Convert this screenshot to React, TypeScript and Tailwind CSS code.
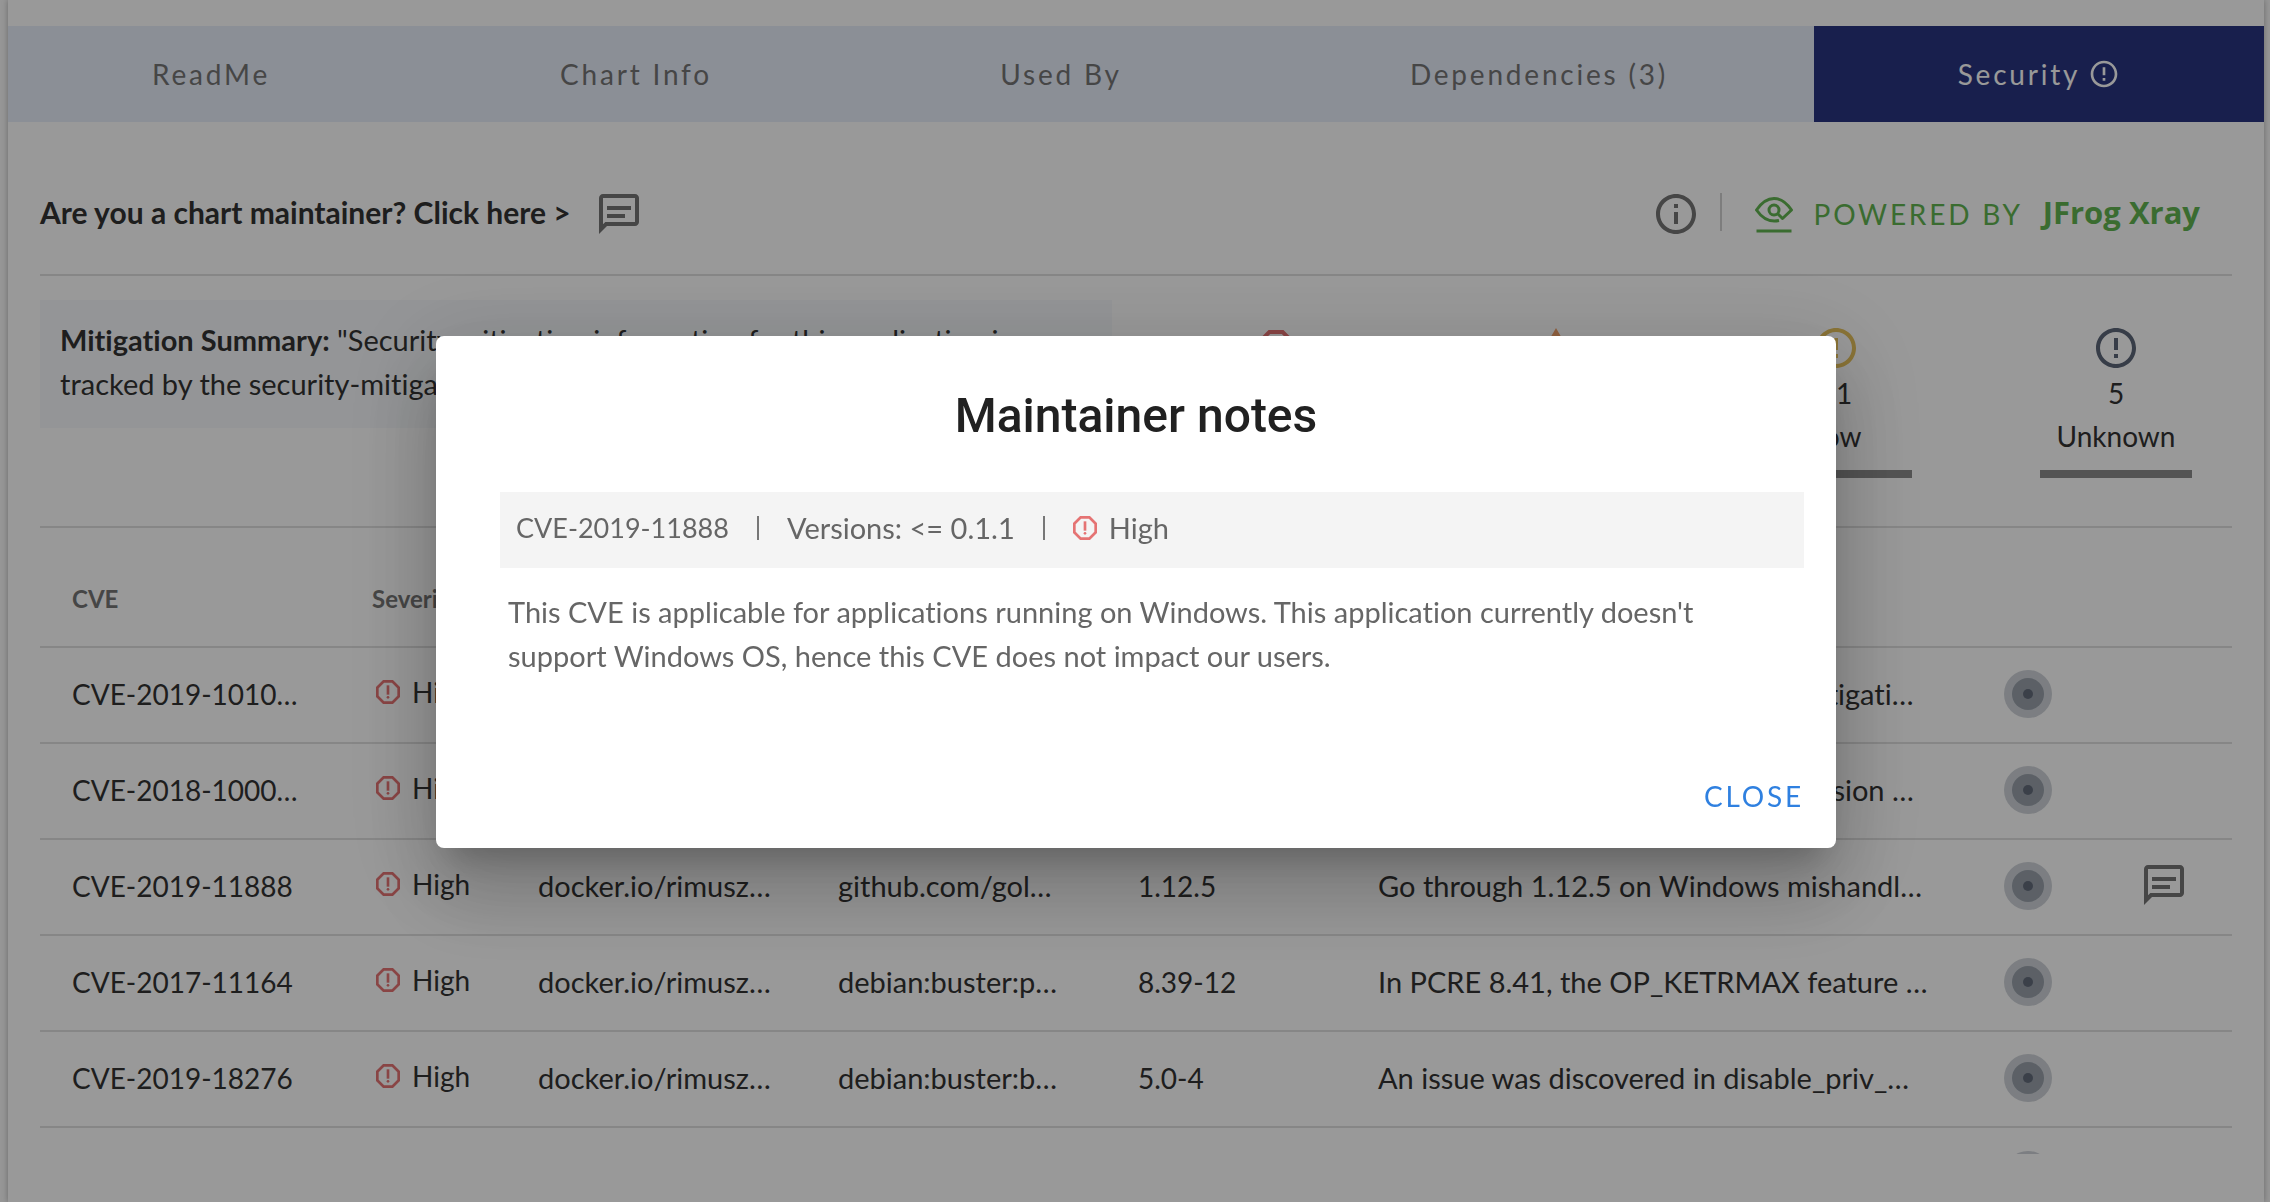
import React from "react";

type Row = {
  cve: string;
  component: string;
  source: string;
  version: string;
  summary: string;
  note?: boolean;
};

const tabs = ["ReadMe", "Chart Info", "Used By", "Dependencies (3)"];

const rows: Row[] = [
  { cve: "CVE-2019-1010…", component: "docker.io/rimusz…", source: "debian:buster:g…", version: "2.28-10", summary: "GNU Libc current is affected by: Mitigati…" },
  { cve: "CVE-2018-1000…", component: "docker.io/rimusz…", source: "debian:buster:t…", version: "4.13-3", summary: "GNU Libtasn1-4.13 libtasn1-4.1 version …" },
  { cve: "CVE-2019-11888", component: "docker.io/rimusz…", source: "github.com/gol…", version: "1.12.5", summary: "Go through 1.12.5 on Windows mishandl…", note: true },
  { cve: "CVE-2017-11164", component: "docker.io/rimusz…", source: "debian:buster:p…", version: "8.39-12", summary: "In PCRE 8.41, the OP_KETRMAX feature …" },
  { cve: "CVE-2019-18276", component: "docker.io/rimusz…", source: "debian:buster:b…", version: "5.0-4", summary: "An issue was discovered in disable_priv_…" },
];

function NoteIcon() {
  return (
    <svg viewBox="0 0 24 24" className="size-12 shrink-0 fill-[#757575]" aria-hidden="true">
      <path d="M4 4h16v12H5.17L4 17.17V4m0-2c-1.1 0-1.99.9-1.99 2L2 22l4-4h14c1.1 0 2-.9 2-2V4c0-1.1-.9-2-2-2H4zm2 10h9v2H6v-2zm0-4h12v2H6V8z" />
    </svg>
  );
}

function HighIcon({ className }: { className: string }) {
  return (
    <svg viewBox="0 0 24 24" className={"shrink-0 " + className} aria-hidden="true">
      <path d="M15.73 3H8.27L3 8.27v7.46L8.27 21h7.46L21 15.73V8.27L15.73 3zM19 14.9L14.9 19H9.1L5 14.9V9.1L9.1 5h5.8L19 9.1v5.8z" />
      <circle cx="12" cy="16" r="1" />
      <path d="M11 7h2v7h-2z" />
    </svg>
  );
}

function AlertCircle({ className }: { className: string }) {
  return (
    <svg viewBox="0 0 24 24" className={"shrink-0 " + className} aria-hidden="true">
      <path d="M11 15h2v2h-2zm0-8h2v6h-2zm.99-5C6.47 2 2 6.48 2 12s4.47 10 9.99 10C17.52 22 22 17.52 22 12S17.52 2 11.99 2zM12 20c-4.42 0-8-3.58-8-8s3.58-8 8-8 8 3.58 8 8-3.58 8-8 8z" />
    </svg>
  );
}

function XrayEye() {
  return (
    <svg viewBox="0 0 40 40" className="size-10 shrink-0 fill-none stroke-[#62b450]" strokeWidth="3" aria-hidden="true">
      <path d="M25 26.5C16 28.5 8 24 2.500 16C8 8 14 4.500 20 4.500S32 8 37.500 16L28.500 24.500L23.500 19.500" strokeLinejoin="round" />
      <circle cx="20" cy="16" r="5" />
      <path d="M2.500 37h35" />
    </svg>
  );
}

function Stat({ icon, count, label }: { icon: React.ReactNode; count: number; label: string }) {
  return (
    <div className="flex w-[152px] flex-col items-center text-[28px] leading-[43px] text-[#333]">
      {icon}
      <span>{count}</span>
      <span>{label}</span>
      <span className="mt-3 h-2 w-full bg-[#8c8c8c]" />
    </div>
  );
}

function RiskDot() {
  return (
    <span className="flex size-12 items-center justify-center rounded-full bg-[#cfd3d9]">
      <span className="flex size-8 items-center justify-center rounded-full bg-[#99a1ab]">
        <span className="size-[10px] rounded-full bg-[#636b7b]" />
      </span>
    </span>
  );
}

export default function App() {
  return (
    <div className="h-screen overflow-hidden bg-[#fafafa] pr-[6px] pl-[8px] font-['Lato',sans-serif] [font-variant-ligatures:none]">
      <main className="h-full bg-white pt-[26px] shadow-[0_0_6px_rgba(0,0,0,0.3)]">
        <nav className="grid h-24 grid-cols-[406fr_444fr_406fr_550fr_450fr] bg-[#e8eefb] text-[28px] tracking-widest text-[#757575]">
          {tabs.map((tab) => (
            <button key={tab} type="button">{tab}</button>
          ))}
          <button type="button" className="flex items-center justify-center gap-2 bg-[#283580] tracking-widest text-white">
            Security
            <AlertCircle className="size-8 fill-white" />
          </button>
        </nav>

        <div className="px-8">
          <header className="flex h-[154px] items-center justify-between border-b-2 border-[#e0e0e0] pt-8">
            <button type="button" className="flex items-center gap-6 text-[30px] leading-[44px] font-bold text-[#333]">
              <span className="pb-1">Are you a chart maintainer? Click here &gt;</span>
              <NoteIcon />
            </button>
            <div className="flex items-center pr-8">
              <svg viewBox="0 0 24 24" className="size-12 fill-[#757575]" role="img" aria-label="About this scan">
                <path d="M11 7h2v2h-2zm0 4h2v6h-2zm1-9C6.480 2 2 6.480 2 12s4.480 10 10 10 10-4.480 10-10S17.520 2 12 2zm0 18c-4.410 0-8-3.590-8-8s3.590-8 8-8 8 3.590 8 8-3.590 8-8 8z" />
              </svg>
              <span className="mb-1 ml-5 h-[38px] w-0.5 bg-[#d0d0d0]" />
              <a href="#xray" className="ml-8 flex items-center gap-5 text-[28px] tracking-widest text-[#62b450]">
                <XrayEye />
                POWERED BY
                <span className="pb-1 font-['Open_Sans',sans-serif] text-[31px] leading-10 font-bold tracking-normal">JFrog Xray</span>
              </a>
            </div>
          </header>

          <section className="flex h-[252px] items-start justify-between border-b-2 border-[#e0e0e0] pt-6">
            <p className="h-32 w-[1072px] bg-[#f7f9fc] px-5 pt-[18px] text-[29px] leading-[44px] whitespace-nowrap text-[#333]">
              <strong>Mitigation Summary:</strong> "Security mitigation information for this application is
              <br />
              tracked by the security-mitigation.yaml file"
            </p>
            <div className="mr-10 flex w-[992px] justify-between pt-6">
              <Stat icon={<HighIcon className="size-12 fill-[#e57373]" />} count={14} label="High" />
              <Stat
                icon={
                  <svg viewBox="0 0 24 24" className="size-12 fill-[#f0a06a]" aria-hidden="true">
                    <path d="M12 5.990L19.530 19H4.470L12 5.990M12 2L1 21h22L12 2zm1 14h-2v2h2v-2zm0-6h-2v4h2v-4z" />
                  </svg>
                }
                count={28}
                label="Medium"
              />
              <Stat icon={<AlertCircle className="size-12 fill-[#e6c15c]" />} count={11} label="Low" />
              <Stat icon={<AlertCircle className="size-12 fill-[#5c6678]" />} count={5} label="Unknown" />
            </div>
          </section>

          <div className="h-[626px] overflow-hidden">
            <table className="w-full table-fixed text-left text-[28px] text-[#333]">
              <colgroup>
                <col className="w-[300px]" />
                <col className="w-[166px]" />
                <col className="w-[300px]" />
                <col className="w-[300px]" />
                <col className="w-[240px]" />
                <col />
                <col className="w-[136px]" />
                <col className="w-[124px]" />
              </colgroup>
              <thead>
                <tr className="h-[119px] border-b-2 border-[#e0e0e0] text-[24px] text-[#757575]">
                  <th className="pt-6 pl-8">CVE</th>
                  <th className="pt-6 pl-8">Severity</th>
                  <th className="pt-6 pl-8">Component</th>
                  <th className="pt-6 pl-8">Source</th>
                  <th className="pt-6 pl-8">Version</th>
                  <th className="pt-6 pl-8">Summary</th>
                  <th />
                  <th />
                </tr>
              </thead>
              <tbody>
                {rows.map((row) => (
                  <tr key={row.cve} className="h-24 border-b-2 border-[#e0e0e0] whitespace-nowrap">
                    <td className="pb-0.5 pl-8">{row.cve}</td>
                    <td className="pb-1.5 pl-8">
                      <span className="flex items-center gap-2">
                        <HighIcon className="size-8 fill-[#e57373]" />
                        High
                      </span>
                    </td>
                    <td className="pb-0.5 pl-8 text-[29px]">{row.component}</td>
                    <td className="pb-0.5 pl-8 text-[29px]">{row.source}</td>
                    <td className="pb-0.5 pl-8">{row.version}</td>
                    <td className="pb-0.5 pl-8 text-[29px]">{row.summary}</td>
                    <td className="pb-0.5 pl-8"><RiskDot /></td>
                    <td className="pl-8">
                      {row.note && (
                        <button type="button" aria-label="Maintainer notes" className="block pb-1">
                          <NoteIcon />
                        </button>
                      )}
                    </td>
                  </tr>
                ))}
                <tr className="h-24">
                  <td colSpan={6} />
                  <td className="pb-0.5 pl-8"><RiskDot /></td>
                  <td />
                </tr>
              </tbody>
            </table>
          </div>
        </div>
      </main>

      <div className="fixed inset-0 flex items-center justify-center bg-black/40 pb-[18px] pl-0.5">
        <div
          role="dialog"
          aria-modal="true"
          aria-labelledby="notes-title"
          className="flex min-h-[512px] w-[1400px] flex-col rounded-lg bg-white pt-12 pr-8 pb-6 pl-16 shadow-[0_22px_30px_-14px_rgba(0,0,0,0.2),0_48px_76px_6px_rgba(0,0,0,0.14),0_18px_92px_16px_rgba(0,0,0,0.12)]"
        >
          <h2 id="notes-title" className="pr-8 text-center font-['Roboto',sans-serif] text-[48px] leading-[64px] font-medium text-[#212121]">
            Maintainer notes
          </h2>
          <div className="mt-11 flex h-[76px] items-center bg-[#f4f4f4] px-4 pb-1 text-[29px] text-[#666]">
            <span className="text-[27px]">CVE-2019-11888</span>
            <span className="mx-7 h-6 w-0.5 bg-[#777]" />
            <span>Versions: &lt;= 0.1.1</span>
            <span className="mr-6 ml-7 h-6 w-0.5 bg-[#777]" />
            <HighIcon className="size-8 fill-[#e57373]" />
            <span className="ml-2">High</span>
          </div>
          <p className="mt-[22px] px-2 text-[29px] leading-[44px] text-[#666]">
            This CVE is applicable for applications running on Windows. This application currently doesn't
            <br />
            support Windows OS, hence this CVE does not impact our users.
          </p>
          <button type="button" className="mt-auto self-end text-[28px] leading-[56px] tracking-widest text-[#2f80e0]">
            CLOSE
          </button>
        </div>
      </div>
    </div>
  );
}
